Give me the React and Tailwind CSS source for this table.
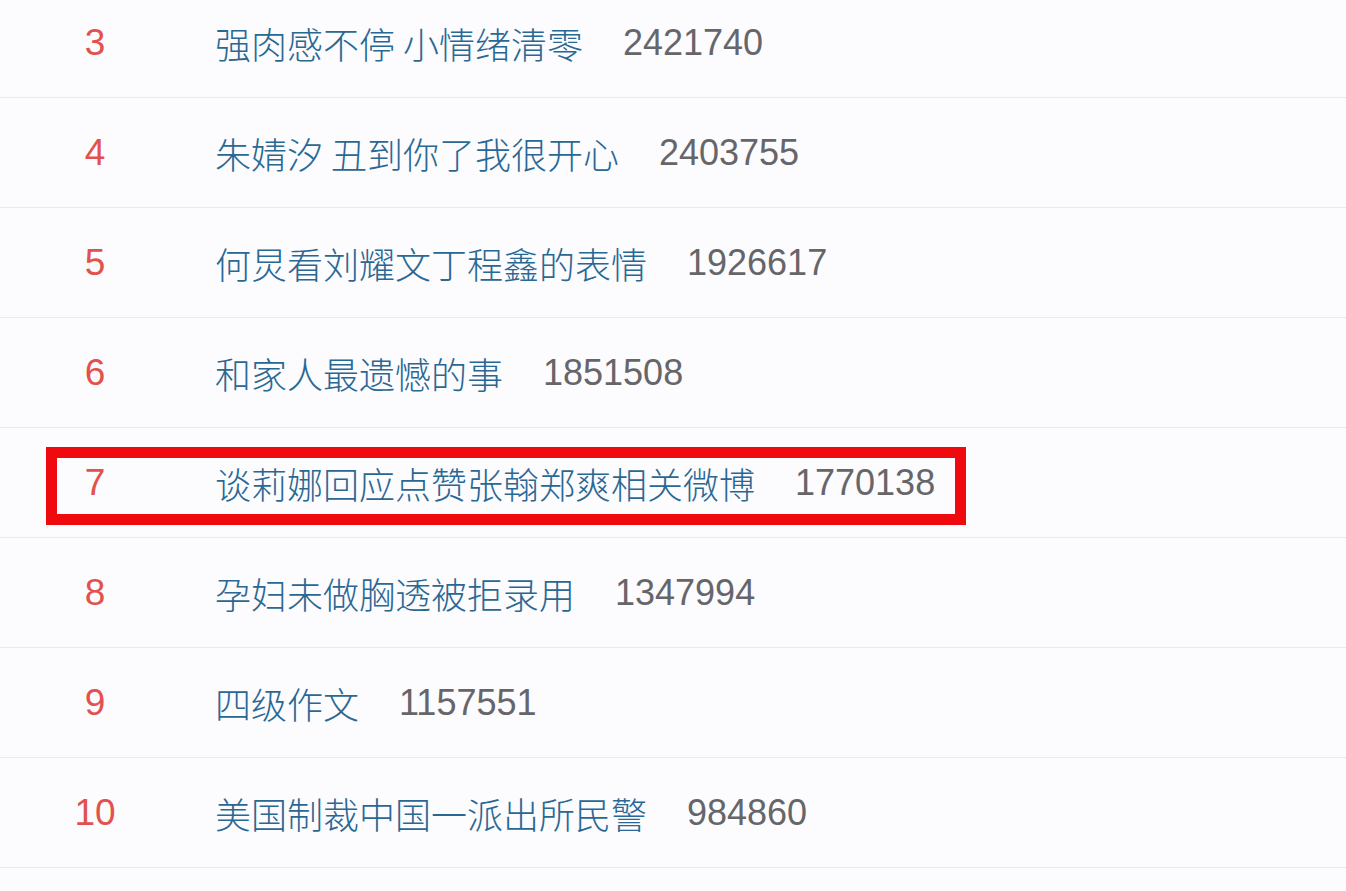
const rows = [
  { rank: 3, title: "强肉感不停 小情绪清零", count: "2421740" },
  { rank: 4, title: "朱婧汐 丑到你了我很开心", count: "2403755" },
  { rank: 5, title: "何炅看刘耀文丁程鑫的表情", count: "1926617" },
  { rank: 6, title: "和家人最遗憾的事", count: "1851508" },
  { rank: 7, title: "谈莉娜回应点赞张翰郑爽相关微博", count: "1770138", marked: true },
  { rank: 8, title: "孕妇未做胸透被拒录用", count: "1347994" },
  { rank: 9, title: "四级作文", count: "1157551" },
  { rank: 10, title: "美国制裁中国一派出所民警", count: "984860" },
  { rank: 11, title: "", count: "" },
];

function Row({ rank, title, count, marked }) {
  return (
    <div className="relative h-[110px] border-b border-[#e9e8ee] flex items-center">
      <div className="w-[190px] text-center text-[37px] text-[#e2514d] font-['Liberation_Sans',sans-serif]">
        {title ? rank : ""}
      </div>
      <div className="ml-[25px] flex items-center gap-[40px] text-[36px] leading-none">
        <span className="text-[#2a6894] font-light font-['Noto_Sans_CJK_SC',sans-serif]">
          {title}
        </span>
        <span className="text-[#666669] font-['Liberation_Sans',sans-serif]">{count}</span>
      </div>
      {marked && (
        <div className="absolute left-[46px] top-[19px] w-[920px] h-[78px] border-[11px] border-[#ee0a0e]" />
      )}
    </div>
  );
}

export default function App() {
  return (
    <div className="w-[1346px] h-[891px] overflow-hidden bg-[#fcfbfe]">
      <div className="-mt-[12px]">
        {rows.map((r) => (
          <Row key={r.rank} {...r} />
        ))}
      </div>
    </div>
  );
}
